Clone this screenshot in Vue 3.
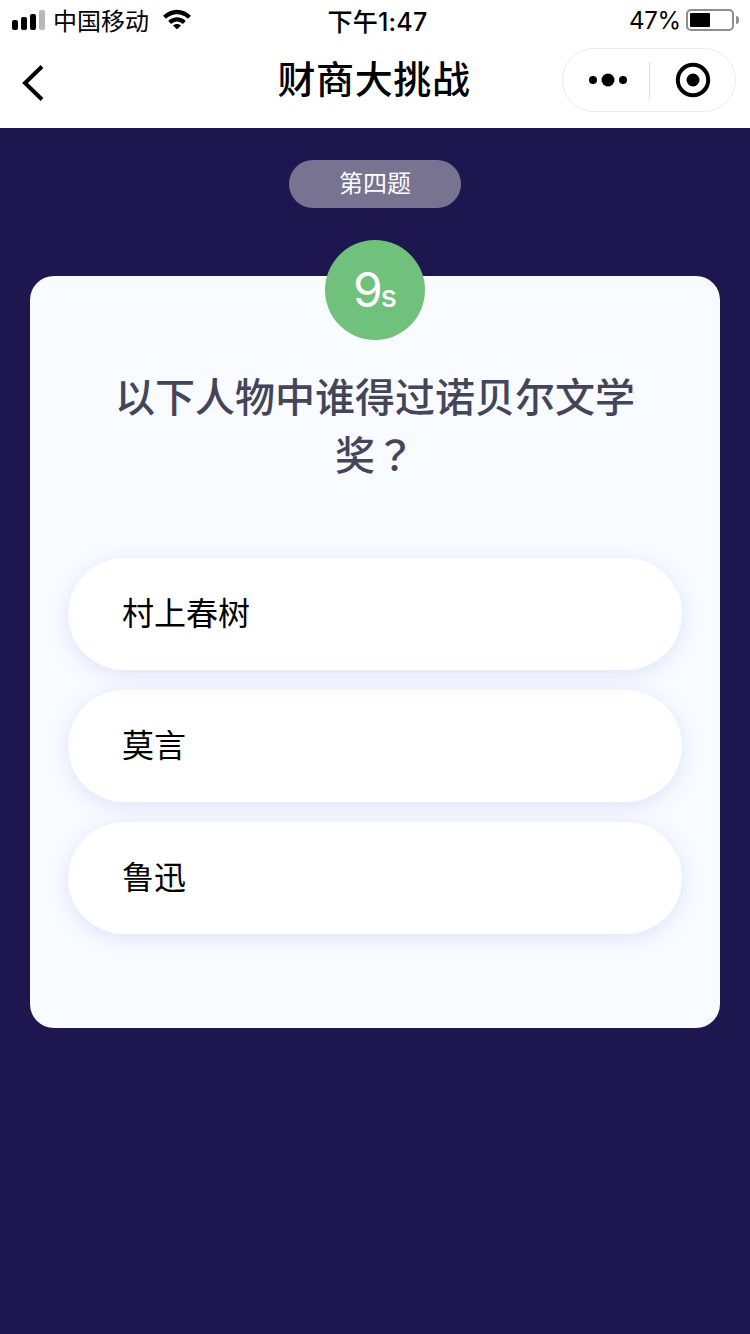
<template>
	<div class="page">
		<!-- status bar -->
		<div class="status-bar">
			<div class="status-left">
				<div class="signal">
					<span class="bar b1"></span>
					<span class="bar b2"></span>
					<span class="bar b3"></span>
					<span class="bar b4"></span>
				</div>
				<span class="carrier">中国移动</span>
				<svg class="wifi" width="28" height="20" viewBox="0 0 28 20">
					<path d="M0 6.8 C8 -1.4 20 -1.4 28 6.8 L25 9.8 C18.8 3.6 9.2 3.6 3 9.8 Z" fill="#000" />
					<path d="M5.2 12 C10.4 7 17.6 7 22.8 12 L19.9 15 C16.2 11.6 11.8 11.6 8.1 15 Z" fill="#000" />
					<path d="M10 16.4 C12.4 14.4 15.6 14.4 18 16.4 L14 20.4 Z" fill="#000" />
				</svg>
			</div>
			<span class="time">下午1:47</span>
			<div class="status-right">
				<span class="percent">47%</span>
				<div class="battery"><span class="battery-fill"></span></div>
				<span class="battery-tip"></span>
			</div>
		</div>

		<!-- nav bar -->
		<div class="nav-bar">
			<svg class="back" width="24" height="38" viewBox="0 0 24 38">
				<path d="M21 2.5 L4 19 L21 35.5" fill="none" stroke="#000" stroke-width="4" />
			</svg>
			<span class="nav-title">财商大挑战</span>
			<div class="capsule">
				<div class="capsule-part more">
					<svg width="38" height="14" viewBox="0 0 38 14">
						<circle cx="4" cy="7" r="4" fill="#000" />
						<circle cx="19" cy="7" r="6.5" fill="#000" />
						<circle cx="34" cy="7" r="4" fill="#000" />
					</svg>
				</div>
				<span class="capsule-line"></span>
				<div class="capsule-part close">
					<svg width="36" height="36" viewBox="0 0 36 36">
						<circle cx="18" cy="18" r="15.2" fill="none" stroke="#000" stroke-width="4" />
						<circle cx="18" cy="18" r="6.5" fill="#000" />
					</svg>
				</div>
			</div>
		</div>

		<!-- quiz -->
		<div class="quiz">
			<div class="question-no">第四题</div>
			<div class="card">
				<div class="timer"><span class="timer-num">9</span><span class="timer-unit">s</span></div>
				<div class="question">
					<div>以下人物中谁得过诺贝尔文学</div>
					<div>奖<span class="mark">？</span></div>
				</div>
				<div class="options">
					<div v-for="item in options" :key="item" class="option">{{ item }}</div>
				</div>
			</div>
		</div>
	</div>
</template>

<script setup>
	const options = ["村上春树", "莫言", "鲁迅"];
</script>

<style>
	html,
	body {
		margin: 0;
		background: #1e164e;
	}
</style>

<style scoped>
	.page {
		width: 750px;
		height: 1334px;
		overflow: hidden;
		background: #1e164e;
		font-family: "Liberation Sans", "Noto Sans CJK SC", sans-serif;
	}

	.status-bar {
		height: 40px;
		background: #fff;
		display: flex;
		align-items: center;
		justify-content: space-between;
		color: #000;
		font-size: 24px;
	}

	.status-left {
		width: 240px;
		display: flex;
		align-items: center;
		padding-left: 12px;
		box-sizing: border-box;
	}

	.signal {
		display: flex;
		align-items: flex-end;
		gap: 3px;
		height: 20px;
	}

	.bar {
		width: 6px;
		border-radius: 2px;
		background: #000;
	}

	.b1 {
		height: 10px;
	}

	.b2 {
		height: 13px;
	}

	.b3 {
		height: 16px;
	}

	.b4 {
		height: 20px;
		background: #b8b8b8;
	}

	.carrier {
		margin-left: 8px;
		margin-top: -1px;
	}

	.wifi {
		margin-left: 14px;
		margin-top: -3px;
	}

	.time {
		margin-left: 5px;
		margin-top: -1px;
		font-family: "Inter", "Noto Sans CJK SC", sans-serif;
		font-weight: 500;
		font-size: 25px;
		letter-spacing: 0.2px;
	}

	.status-right {
		width: 240px;
		display: flex;
		align-items: center;
		justify-content: flex-end;
		padding-right: 11px;
		box-sizing: border-box;
	}

	.percent {
		font-family: "Inter", sans-serif;
		font-size: 24px;
		margin-right: 5px;
		letter-spacing: -0.2px;
	}

	.battery {
		width: 48px;
		height: 22px;
		border: 2px solid #8e8e8e;
		border-radius: 5px;
		box-sizing: border-box;
		padding: 2px;
		display: flex;
	}

	.battery-fill {
		width: 20px;
		background: #000;
		border-radius: 1px;
	}

	.battery-tip {
		width: 3px;
		height: 8px;
		margin-left: 2px;
		background: #8e8e8e;
		border-radius: 0 3px 3px 0;
	}

	.nav-bar {
		height: 88px;
		background: #fff;
		display: flex;
		align-items: center;
		justify-content: space-between;
		position: relative;
		padding: 0 14px 0 21px;
		box-sizing: border-box;
	}

	.back {
		margin-top: -2px;
	}

	.nav-title {
		position: absolute;
		left: 0;
		right: 2px;
		top: 16px;
		text-align: center;
		font-size: 38px;
		line-height: 48px;
		font-weight: 500;
		letter-spacing: 0.6px;
		color: #000;
	}

	.capsule {
		width: 174px;
		height: 64px;
		margin-top: -8px;
		border: 1px solid #ebebeb;
		border-radius: 32px;
		box-sizing: border-box;
		display: flex;
		align-items: center;
		background: #fff;
	}

	.capsule-part {
		display: flex;
		align-items: center;
		justify-content: center;
		box-sizing: border-box;
	}

	.more {
		width: 86px;
		padding-left: 3px;
	}

	.close {
		width: 85px;
	}

	.capsule-line {
		width: 1px;
		height: 37px;
		background: #dcdcdc;
	}

	.quiz {
		display: flex;
		flex-direction: column;
		align-items: center;
		padding-top: 32px;
	}

	.question-no {
		width: 172px;
		height: 48px;
		line-height: 47px;
		border-radius: 24px;
		background: #787391;
		color: #fff;
		font-size: 24px;
		text-align: center;
	}

	.card {
		position: relative;
		width: 690px;
		height: 752px;
		margin-top: 68px;
		background: #f8fbff;
		border-radius: 24px;
		box-sizing: border-box;
		padding: 93px 38px 0;
	}

	.timer {
		position: absolute;
		left: 295px;
		top: -36px;
		width: 100px;
		height: 100px;
		border-radius: 50%;
		background: #70c17b;
		color: #fff;
		display: flex;
		align-items: baseline;
		justify-content: center;
		line-height: 100px;
	}

	.timer-num {
		font-size: 48px;
		font-family: "Inter", sans-serif;
		font-weight: 400;
		margin-right: -2px;
	}

	.timer-unit {
		font-size: 30px;
		font-family: "Inter", sans-serif;
		font-weight: 500;
	}

	.question {
		width: 540px;
		margin: 0 auto;
		font-size: 40px;
		line-height: 58px;
		font-weight: 500;
		color: #45455a;
		text-align: center;
	}

	.mark {
		font-family: "Noto Sans CJK TC", sans-serif;
		line-height: 0;
	}

	.options {
		margin-top: 73px;
		display: flex;
		flex-direction: column;
		gap: 20px;
	}

	.option {
		width: 614px;
		height: 112px;
		line-height: 112px;
		padding-left: 54px;
		box-sizing: border-box;
		border-radius: 56px;
		background: #fff;
		box-shadow: 0 4px 20px rgba(120, 135, 240, 0.2);
		color: #000;
		font-size: 32px;
	}
</style>
